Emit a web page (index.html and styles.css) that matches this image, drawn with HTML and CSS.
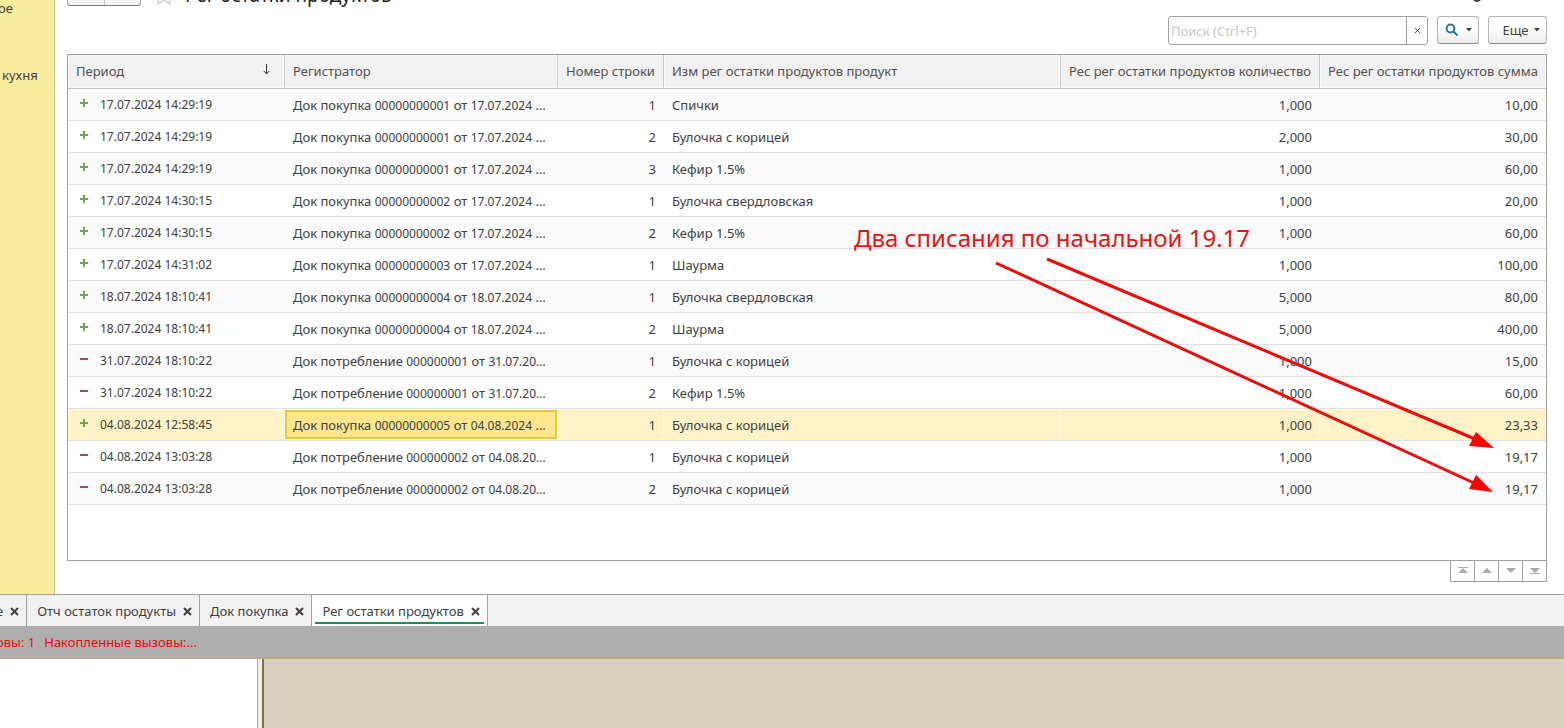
FILE: index.html
```html
<!DOCTYPE html>
<html lang="ru">
<head>
<meta charset="utf-8">
<title>Рег остатки продуктов</title>
<link rel="stylesheet" href="styles.css">
</head>
<body>
<div class="workspace">
  <nav class="sidebar">
    <a class="side-link side-link-short" href="#">ое</a>
    <a class="side-link" href="#">кухня</a>
  </nav>
  <main class="content">
    <header class="title-bar">
      <div class="nav-buttons"><button type="button" aria-label="Назад"></button><button type="button" aria-label="Вперед"></button></div>
      <svg class="star" viewBox="0 0 20 20" aria-hidden="true"><path d="M10 1l2.6 6.2 6.4.5-4.900 4.200 1.500 6.500L10 15l-5.600 3.400 1.500-6.500L1 7.700l6.400-.5z"/></svg>
      <h1>Рег остатки продуктов</h1>
      <svg class="link-icon" width="8" height="8" viewBox="0 0 8 8" aria-hidden="true"><path d="M1 4c0 4 6 4 6 0"/></svg>
    </header>
    <div class="toolbar">
      <div class="search">
        <input type="text" placeholder="Поиск (Ctrl+F)" aria-label="Поиск">
        <button type="button" aria-label="Очистить"><svg width="7" height="7" viewBox="0 0 7 7"><path d="M1 1l5 5M6 1L1 6"/></svg></button>
      </div>
      <button class="tool find" type="button" aria-label="Найти">
        <svg class="lens" width="14" height="14" viewBox="0 0 14 14"><circle cx="5.500" cy="5.500" r="3.900"/><path d="M8.500 8.500l4 4"/></svg>
        <svg class="caret" width="6" height="4" viewBox="0 0 6 4"><path d="M0 0h6L3 3.500z"/></svg>
      </button>
      <button class="tool more" type="button">Еще <svg class="caret" width="6" height="4" viewBox="0 0 6 4"><path d="M0 0h6L3 3.500z"/></svg></button>
    </div>
    <div class="grid-wrap">
      <div class="grid">
        <table>
          <colgroup><col class="c-period"><col class="c-doc"><col class="c-line"><col><col class="c-qty"><col class="c-sum"></colgroup>
          <thead>
            <tr>
              <th><span class="sorted">Период <svg width="7" height="11" viewBox="0 0 7 11"><path d="M3.500 0v9.500M.8 7l2.700 3L6.200 7"/></svg></span></th>
              <th>Регистратор</th><th>Номер строки</th><th>Изм рег остатки продуктов продукт</th><th>Рес рег остатки продуктов количество</th><th>Рес рег остатки продуктов сумма</th>
            </tr>
          </thead>
          <tbody id="rows"></tbody>
        </table>
      </div>
      <div class="pager">
        <button type="button" aria-label="В начало"><svg width="12" height="8" viewBox="0 0 12 8"><path d="M1 0h10v1H1zM6 1l5 5H1z"/></svg></button>
        <button type="button" aria-label="Вверх"><svg width="12" height="8" viewBox="0 0 12 8"><path d="M6 1l5 5H1z"/></svg></button>
        <button type="button" aria-label="Вниз"><svg width="12" height="8" viewBox="0 0 12 8"><path d="M1 1h10L6 6z"/></svg></button>
        <button type="button" aria-label="В конец"><svg width="12" height="8" viewBox="0 0 12 8"><path d="M1 1h10L6 6zM1 6h10v1H1z"/></svg></button>
      </div>
      <div class="note">
        <p>Два списания по начальной 19.17</p>
        <svg width="640" height="240" viewBox="0 0 640 240" aria-hidden="true">
          <path class="shaft" d="M142 9l478 220M193 5l428 180"/>
          <path class="head" d="M640 194l-18-16-7 14zM639 238l-17-17-7 14z"/>
        </svg>
      </div>
    </div>
  </main>
</div>
<nav class="tabs">
  <div class="tab first"><a href="#">е</a><button type="button" aria-label="Закрыть"><svg width="9" height="9" viewBox="0 0 9 9"><path d="M1 1l7 7M8 1L1 8"/></svg></button></div>
  <div class="tab"><a href="#">Отч остаток продукты</a><button type="button" aria-label="Закрыть"><svg width="9" height="9" viewBox="0 0 9 9"><path d="M1 1l7 7M8 1L1 8"/></svg></button></div>
  <div class="tab"><a href="#">Док покупка</a><button type="button" aria-label="Закрыть"><svg width="9" height="9" viewBox="0 0 9 9"><path d="M1 1l7 7M8 1L1 8"/></svg></button></div>
  <div class="tab active"><a href="#">Рег остатки продуктов</a><button type="button" aria-label="Закрыть"><svg width="9" height="9" viewBox="0 0 9 9"><path d="M1 1l7 7M8 1L1 8"/></svg></button></div>
</nav>
<div class="status"><span>овы: 1</span><span>Накопленные вызовы:...</span></div>
<div class="lower"><div class="panel"></div><div class="splitter"></div><div class="canvas"></div></div>
<script src="rows.js"></script>
</body>
</html>
```
FILE: styles.css
```css
* { box-sizing: border-box; }
body {
  margin: 0;
  height: 100vh;
  display: flex;
  flex-direction: column;
  overflow: hidden;
  background: #fff;
  color: #404040;
  font: 13px/18px "Noto Sans", "Open Sans", sans-serif;
}
button, input { font: inherit; color: inherit; margin: 0; padding: 0; }
button { display: flex; align-items: center; justify-content: center; background: none; border: 0; }
a { color: inherit; text-decoration: none; }
svg { flex: none; }

.workspace { flex: 1; display: flex; min-height: 0; }
.sidebar {
  width: 55px;
  flex: none;
  display: flex;
  flex-direction: column;
  gap: 50px;
  background: #fbeb9e;
  border-right: 1px solid #c9bf88;
}
.side-link { padding-left: 2px; line-height: 17px; }
.side-link-short { padding-left: 0; margin-left: -2px; }
.content { flex: 1; min-width: 0; display: flex; flex-direction: column; padding: 0 17px 12px 12px; }

.title-bar { height: 8px; display: flex; align-items: flex-end; overflow: hidden; }
.nav-buttons { display: flex; width: 74px; height: 28px; margin-bottom: 2px; border: 1px solid #a0a0a0; border-bottom-color: #808080; border-radius: 3px; background: #f2f2f2; }
.nav-buttons button { flex: 1; }
.nav-buttons button + button { border-left: 1px solid #c8c8c8; }
.star { width: 22px; height: 22px; margin: 0 10px 2px 12px; fill: none; stroke: #c4c4c4; }
h1 { margin: 0; font-size: 19px; line-height: 26px; font-weight: 400; color: #222; }
.link-icon { margin: 0 66px 6px auto; fill: none; stroke: #444; stroke-width: 2; }

.toolbar { display: flex; justify-content: flex-end; align-items: flex-start; margin-top: 8px; height: 38px; }
.search { display: flex; width: 260px; height: 29px; margin-right: 9px; border: 1px solid #a0a0a0; border-radius: 3px; }
.search input { flex: 1; min-width: 0; border: 0; outline: 0; padding: 0 2px; background: none; }
.search input::placeholder { color: #c6c6c6; opacity: 1; }
.search button { width: 21px; border-left: 1px solid #a0a0a0; }
.search button svg { stroke: #555; fill: none; }
.tool { height: 28px; border: 1px solid #b4b4b4; border-bottom-color: #888; border-radius: 3px; background: linear-gradient(#fff 40%, #ebebeb); }
.find { width: 42px; gap: 7px; margin-right: 9px; }
.more { width: 59px; gap: 5px; padding-left: 7px; }
.lens { fill: none; stroke: #2f7394; stroke-width: 2; }
.caret { fill: #404040; }

.grid-wrap { flex: 1; min-height: 0; display: flex; flex-direction: column; position: relative; }
.grid { flex: 1; min-height: 0; overflow: hidden; border: 1px solid #a0a0a0; }
table { width: 100%; table-layout: fixed; border-collapse: separate; border-spacing: 0; }
.c-period { width: 217px; }
.c-doc { width: 273px; }
.c-line { width: 106px; }
.c-qty { width: 259px; }
.c-sum { width: 226px; }
th {
  height: 34px;
  padding: 0 8px 2px;
  font-weight: 400;
  text-align: left;
  white-space: nowrap;
  color: #505050;
  background: #f1f1f1;
  border-right: 1px solid #c8c8c8;
  border-bottom: 1px solid #c0c0c0;
  box-shadow: inset 0 0 0 1px #f9f9f9;
}
th:last-child { border-right: 0; }
.sorted { display: flex; justify-content: space-between; align-items: center; padding-right: 6px; }
.sorted svg { fill: none; stroke: #333; margin-bottom: 3px; }
td { height: 32px; padding: 1px 8px 0; white-space: nowrap; border-bottom: 1px solid #e0e0e0; }
tbody tr:nth-child(odd) td { background: #fafafa; }
td.num { text-align: right; }
.digits { font-size: 12px; }
.period { display: flex; align-items: center; gap: 11px; }
.period svg { margin: 0 0 4px 3px; width: 10px; height: 10px; fill: none; stroke: #70a84c; stroke-width: 2; }
.period .out { stroke: #a84860; }
tbody tr.current td { background: #fff2c6; box-shadow: inset -1px 1px #fff9e6; }
tbody tr.current td.focus {
  background: #ffe58c;
  box-shadow: inset -1px 1px #fff9e6, inset 0 -1px #fff2c6, inset -3px 3px #e6c63c, inset 2px -3px #e6c63c;
}

.pager { align-self: flex-end; display: flex; height: 21px; border: 1px solid #a0a0a0; border-top: 0; }
.pager button { width: 24px; }
.pager button:first-child { width: 23px; }
.pager button + button { border-left: 1px solid #a0a0a0; }
.pager svg { fill: #aaa; }

.note { position: absolute; top: 168px; right: 53px; width: 640px; pointer-events: none; }
.note p { margin: 0; font-size: 24px; line-height: 32px; color: #e81414; }
.note svg { display: block; }
.shaft { fill: none; stroke: #ec0c0c; stroke-width: 3; }
.head { fill: #f00; }

.tabs { display: flex; flex: none; height: 32px; background: #f1f1f1; border-top: 1px solid #a0a0a0; }
.tab { display: flex; align-items: center; gap: 7px; padding: 1px 7px 0 10px; border-right: 1px solid #a0a0a0; position: relative; }
.tab.first { padding-left: 0; margin-left: -4px; }
.tab svg { fill: none; stroke: #404040; stroke-width: 2; }
.tab.active { background: #fff; }
.tab.active::after { content: ""; position: absolute; left: 3px; right: 3px; bottom: 2px; height: 2px; background: #169154; }

.status { display: flex; flex: none; align-items: center; gap: 9px; height: 33px; margin-left: -4px; background: #aeaeae; border-bottom: 2px solid #b4ab8d; color: #f00808; }
.lower { display: flex; flex: none; height: 69px; }
.panel { width: 257px; background: #fff; }
.splitter { width: 7px; background: #f4eedb; border-left: 1px solid #b8ae8c; border-right: 2px solid #77725f; }
.canvas { flex: 1; background: #d9d1bb; }
```
FILE: rows.js
```js
const rows = [
  ["+", "17.07.2024 14:29:19", "Док покупка 00000000001 от 17.07.2024 ...", 1, "Спички", "1,000", "10,00"],
  ["+", "17.07.2024 14:29:19", "Док покупка 00000000001 от 17.07.2024 ...", 2, "Булочка с корицей", "2,000", "30,00"],
  ["+", "17.07.2024 14:29:19", "Док покупка 00000000001 от 17.07.2024 ...", 3, "Кефир 1.5%", "1,000", "60,00"],
  ["+", "17.07.2024 14:30:15", "Док покупка 00000000002 от 17.07.2024 ...", 1, "Булочка свердловская", "1,000", "20,00"],
  ["+", "17.07.2024 14:30:15", "Док покупка 00000000002 от 17.07.2024 ...", 2, "Кефир 1.5%", "1,000", "60,00"],
  ["+", "17.07.2024 14:31:02", "Док покупка 00000000003 от 17.07.2024 ...", 1, "Шаурма", "1,000", "100,00"],
  ["+", "18.07.2024 18:10:41", "Док покупка 00000000004 от 18.07.2024 ...", 1, "Булочка свердловская", "5,000", "80,00"],
  ["+", "18.07.2024 18:10:41", "Док покупка 00000000004 от 18.07.2024 ...", 2, "Шаурма", "5,000", "400,00"],
  ["-", "31.07.2024 18:10:22", "Док потребление 000000001 от 31.07.20...", 1, "Булочка с корицей", "1,000", "15,00"],
  ["-", "31.07.2024 18:10:22", "Док потребление 000000001 от 31.07.20...", 2, "Кефир 1.5%", "1,000", "60,00"],
  ["+", "04.08.2024 12:58:45", "Док покупка 00000000005 от 04.08.2024 ...", 1, "Булочка с корицей", "1,000", "23,33"],
  ["-", "04.08.2024 13:03:28", "Док потребление 000000002 от 04.08.20...", 1, "Булочка с корицей", "1,000", "19,17"],
  ["-", "04.08.2024 13:03:28", "Док потребление 000000002 от 04.08.20...", 2, "Булочка с корицей", "1,000", "19,17"]
];
const current = 10;
const plus = '<svg viewBox="0 0 10 10"><path d="M5 1v8M1 5h8"/></svg>';
const minus = '<svg class="out" viewBox="0 0 10 10"><path d="M1 5h8"/></svg>';
const digits = (text) => text.replace(/\d[\d.]*/g, '<span class="digits">$&</span>');
document.getElementById("rows").innerHTML = rows.map(([sign, period, doc, line, item, qty, sum], i) => `
  <tr class="${i === current ? "current" : ""}">
    <td><span class="period">${sign === "+" ? plus : minus}<span class="digits">${period}</span></span></td>
    <td class="${i === current ? "focus" : ""}">${digits(doc)}</td>
    <td class="num">${line}</td>
    <td>${item}</td>
    <td class="num">${qty}</td>
    <td class="num">${sum}</td>
  </tr>`).join("");
```
